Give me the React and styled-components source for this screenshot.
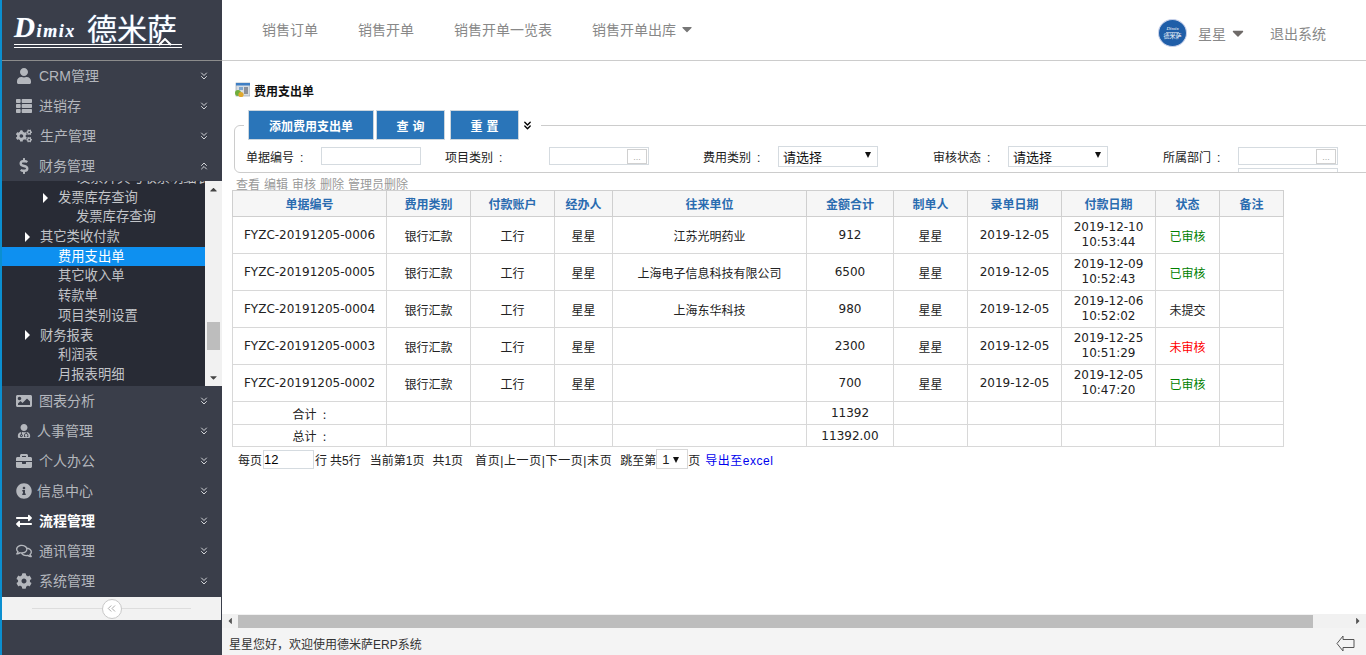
import styled, { createGlobalStyle } from "styled-components";
import {
  FaUser,
  FaThList,
  FaCogs,
  FaDollarSign,
  FaImage,
  FaUserMd,
  FaBriefcase,
  FaInfoCircle,
  FaExchangeAlt,
  FaRegComments,
  FaCog,
  FaCaretDown,
  FaCaretLeft,
  FaCaretRight,
  FaCaretUp,
} from "react-icons/fa";
import { ChevronsDown, ChevronsUp, ChevronsLeft } from "lucide-react";

const FONT = `"Liberation Sans", "Noto Sans CJK SC", sans-serif`;
const TABLE_FONT = `"DejaVu Sans", "Noto Sans CJK SC", sans-serif`;

const GlobalStyle = createGlobalStyle`
  html, body {
    margin: 0;
    padding: 0;
    height: 100%;
    overflow: hidden;
    background: #ffffff;
    font-family: ${FONT};
  }
  * {
    box-sizing: border-box;
  }
`;

const Page = styled.div`
  display: flex;
  width: 1366px;
  height: 655px;
  overflow: hidden;
`;

/* ---------- sidebar ---------- */

const Sidebar = styled.aside`
  flex: 0 0 222px;
  width: 222px;
  min-width: 0;
  display: flex;
  flex-direction: column;
  height: 100%;
  background: #3a3e4a;
  border-left: 2px solid #0b8fd0;
`;

const LogoArea = styled.div`
  height: 61px;
  flex: none;
  border-bottom: 1px solid #8c8c8c;
  padding: 10px 0 0 12px;
`;

const LogoWrap = styled.div`
  width: 168px;
  height: 38px;
  display: flex;
  align-items: flex-end;
  color: #ffffff;
  border-bottom: 4px double #ffffff;
  position: relative;
  text-shadow: 0 0 1px #6ea8e0;
`;

const LogoLatin = styled.span`
  flex: 0 0 73px;
  font-family: "Liberation Serif", serif;
  font-style: italic;
  font-weight: 700;
  font-size: 18px;
  line-height: 20px;
  letter-spacing: 1.6px;
  margin-bottom: 3px;
  white-space: nowrap;
`;

const LogoInitial = styled.span`
  font-size: 29px;
`;

const LogoCjk = styled.span`
  font-family: "Noto Sans CJK SC", sans-serif;
  font-size: 30px;
  line-height: 34px;
  white-space: nowrap;
`;

const LogoPeak = styled.svg`
  position: absolute;
  left: 144px;
  bottom: -2px;
`;

const MenuRow = styled.div`
  height: 30px;
  flex: none;
  display: flex;
  align-items: center;
  padding-left: 11px;
  color: ${(p) => (p.$active ? "#ffffff" : "#b4b7bd")};
  font-size: 14px;
  font-weight: ${(p) => (p.$active ? 700 : 400)};
`;

const MenuIcon = styled.span`
  width: 22px;
  display: flex;
  justify-content: center;
  font-size: ${(p) => p.$size || 16}px;
  color: ${(p) => (p.$active ? "#ffffff" : "#b4b7bd")};
  margin-right: ${(p) => p.$gap ?? 0}px;
`;

const MenuLabel = styled.span`
  flex: 1;
  padding-bottom: 2px;
  padding-left: 2px;
`;

const MenuChevron = styled.span`
  width: 15px;
  display: flex;
  color: #d2d4d8;
  margin-right: 9px;
`;

const SubPanel = styled.div`
  height: 205px;
  flex: none;
  display: flex;
  background: #282b35;
`;

const SubList = styled.div`
  flex: 1;
  min-width: 0;
  overflow: hidden;
  color: #c2c4c8;
  font-size: 13.3px;
`;

const SubRow = styled.div`
  height: 19.7px;
  line-height: 19.7px;
  display: flex;
  align-items: center;
  white-space: nowrap;
  padding-left: ${(p) => p.$indent}px;
  background: ${(p) => (p.$selected ? "#0e90f0" : "transparent")};
  color: ${(p) => (p.$selected ? "#ffffff" : "inherit")};
  margin-top: ${(p) => p.$offset || 0}px;
`;

const Arrow = styled.span`
  width: 0;
  height: 0;
  border-left: 5px solid #ffffff;
  border-top: 5px solid transparent;
  border-bottom: 5px solid transparent;
  margin-right: 10px;
`;

const VScroll = styled.div`
  flex: 0 0 17px;
  background: #f1f1f1;
  display: flex;
  flex-direction: column;
  align-items: center;
  justify-content: space-between;
  color: #444;
  font-size: 11px;
  padding: 3px 0;
  position: relative;
`;

const VThumb = styled.div`
  position: absolute;
  top: 141px;
  left: 2px;
  width: 13px;
  height: 28px;
  background: #bdbdbd;
`;

const CollapseStrip = styled.div`
  height: 23px;
  margin-top: 1px;
  flex: none;
  width: 219px;
  background: #f2f2f2;
  display: flex;
  align-items: center;
  justify-content: center;
  position: relative;
  &::before {
    content: "";
    position: absolute;
    left: 30px;
    right: 30px;
    top: 11px;
    height: 1px;
    background: #dddddd;
  }
`;

const CollapseKnob = styled.div`
  width: 20px;
  height: 20px;
  border-radius: 50%;
  background: #ffffff;
  border: 1px solid #c8c8c8;
  z-index: 1;
  display: flex;
  align-items: center;
  justify-content: center;
  color: #999999;
`;

/* ---------- main column ---------- */

const Main = styled.main`
  flex: 1;
  min-width: 0;
  display: flex;
  flex-direction: column;
`;

const TopBar = styled.header`
  height: 61px;
  flex: none;
  display: flex;
  align-items: center;
  border-bottom: 1px solid #cccccc;
  padding: 0 40px;
  font-size: 14px;
  color: #888888;
`;

const TopNav = styled.nav`
  flex: 1;
  display: flex;
  gap: 40px;
  margin-bottom: 3px;
`;

const TopLink = styled.span`
  display: flex;
  align-items: center;
  gap: 3px;
  svg {
    font-size: 16px;
    color: #777777;
  }
`;

const UserBox = styled.div`
  display: flex;
  align-items: center;
  margin-top: 5px;
  svg {
    color: #6e6a68;
  }
`;

const Avatar = styled.div`
  width: 29px;
  height: 28px;
  border-radius: 50%;
  background: #1f5ea8;
  border: 1px solid #c9d2ea;
  color: #ffffff;
  display: flex;
  flex-direction: column;
  align-items: center;
  justify-content: center;
  font-size: 6px;
  line-height: 7px;
  margin-right: 11px;
`;

const AvatarLatin = styled.span`
  font-family: "Liberation Serif", serif;
  font-style: italic;
  border-bottom: 1px solid #9fb8d8;
  font-size: 5px;
`;

const UserName = styled.span`
  margin-right: 3px;
`;

const Logout = styled.span`
  margin-left: 23px;
`;

const Content = styled.section`
  flex: 1;
  min-height: 0;
  overflow: hidden;
  padding: 21px 0 0 10px;
`;

const TitleRow = styled.div`
  height: 16px;
  display: flex;
  align-items: center;
  gap: 4px;
  margin-left: 2px;
  font-size: 12px;
  font-weight: 700;
  color: #111111;
`;

const FilterSet = styled.fieldset`
  width: 1200px;
  height: 63px;
  margin: 12px 0 0 2px;
  padding: 0 0 0 9px;
  border: 1px solid #cccccc;
  border-radius: 6px;
  overflow: hidden;
`;

const FilterLegend = styled.legend`
  display: flex;
  align-items: center;
  height: 30px;
  padding: 0 7px 0 4px;
`;

const ActionButton = styled.button`
  height: 30px;
  width: ${(p) => p.$w}px;
  margin-right: ${(p) => p.$mr || 0}px;
  border: 1px solid #ccd6de;
  background: #2a75b9;
  color: #ffffff;
  font-family: ${FONT};
  font-size: 12px;
  font-weight: 700;
  letter-spacing: ${(p) => p.$ls || 0}px;
  padding: 0 0 0 ${(p) => p.$ls || 0}px;
`;

const ExpandIcon = styled.span`
  display: flex;
  margin-left: 2px;
  color: #000000;
`;

const FilterRow = styled.div`
  display: flex;
  align-items: center;
  height: 22px;
  margin: 5px 0 0 2px;
  font-size: 12px;
  color: #222222;
`;

const FieldLabel = styled.label`
  width: ${(p) => p.$w}px;
  margin-left: ${(p) => p.$ml || 0}px;
  white-space: pre;
`;

const TextBox = styled.input`
  width: 100px;
  height: 18px;
  border: 1px solid #d5dbe0;
  padding: 0 2px;
  font-family: ${FONT};
  font-size: 12px;
  outline: none;
`;

const PickerBox = styled.div`
  width: 100px;
  height: 18px;
  flex: none;
  border: 1px solid #d5dbe0;
  display: flex;
  justify-content: flex-end;
  align-items: center;
  padding-right: 1px;
  margin-left: ${(p) => p.$ml || 0}px;
  margin-top: ${(p) => p.$mt || 0}px;
`;

const PickerButton = styled.span`
  width: 20px;
  height: 15px;
  border: 1px solid #d0d0d0;
  font-size: 9px;
  line-height: 15px;
  text-align: center;
  color: #aaaaaa;
`;

const SelectBox = styled.div`
  width: 100px;
  height: 21px;
  flex: none;
  border: 1px solid #d5dbe0;
  display: flex;
  align-items: center;
  justify-content: space-between;
  padding: 0 6px 0 4px;
  font-size: 13px;
  color: #111111;
`;

const Triangle = styled.span`
  border-left: 3px solid transparent;
  border-right: 3px solid transparent;
  border-top: 6px solid #111111;
  margin-bottom: ${(p) => p.$mb ?? 2}px;
`;

const OpsRow = styled.div`
  height: 17px;
  line-height: 24px;
  margin-left: 4px;
  display: flex;
  gap: 4px;
  font-size: 12px;
  color: #999999;
`;

const Grid = styled.table`
  width: 1051px;
  border-collapse: collapse;
  table-layout: fixed;
  font-family: ${TABLE_FONT};
  font-size: 12px;
  color: #222222;
  th, td {
    border: 1px solid #d8d8d8;
    text-align: center;
    padding: 0;
    font-weight: 400;
  }
`;

const HeadRow = styled.tr`
  height: 26px;
  background: #f6f6f6;
  th {
    color: #2a6cb0;
    font-weight: 700;
    border-color: #cfcfcf;
  }
`;

const BodyRow = styled.tr`
  height: ${(p) => p.$h || 37}px;
`;

const DateText = styled.div`
  line-height: 15px;
`;

const Status = styled.td`
  && {
    color: ${(p) => p.$color};
  }
`;

const Pager = styled.div`
  display: flex;
  align-items: center;
  height: 20px;
  margin: 2px 0 0 6px;
  font-size: 12px;
  color: #222222;
  white-space: pre;
`;

const PagerPart = styled.span`
  margin-left: ${(p) => p.$ml || 0}px;
  letter-spacing: ${(p) => p.$ls || 0}px;
`;

const PagerInput = styled.input`
  width: 51px;
  height: 19px;
  margin-left: 1px;
  border: 1px solid #d5dbe0;
  padding: 0;
  font-family: ${FONT};
  font-size: 13px;
  outline: none;
`;

const PagerSelect = styled.div`
  width: 32px;
  height: 20px;
  border: 1px solid #d8d8d8;
  display: flex;
  align-items: center;
  justify-content: space-between;
  padding: 0 8px 0 5px;
  font-size: 13px;
`;

const ExportLink = styled.a`
  color: #0000ee;
  margin-left: 5px;
  letter-spacing: 0.5px;
`;

const HScroll = styled.div`
  height: 14px;
  flex: none;
  display: flex;
  align-items: center;
  background: #f1f1f1;
  color: #555555;
  font-size: 10px;
`;

const HArrow = styled.span`
  flex: 0 0 ${(p) => p.$w}px;
  display: flex;
  justify-content: center;
`;

const HThumb = styled.div`
  height: 13px;
  margin-top: 1px;
  flex: 0 0 1075px;
  background: #bdbdbd;
`;

const HTrack = styled.div`
  flex: 1;
`;

const StatusBar = styled.footer`
  height: 27px;
  flex: none;
  background: #f4f4f4;
  display: flex;
  align-items: center;
  justify-content: space-between;
  padding: 4px 11px 0 7px;
  font-size: 12px;
  color: #333333;
`;

const menuTop = [
  { label: "CRM管理", icon: <FaUser />, gap: 2 },
  { label: "进销存", icon: <FaThList />, gap: 2 },
  { label: "生产管理", icon: <FaCogs />, gap: 3 },
  { label: "财务管理", icon: <FaDollarSign />, gap: 2, open: true },
];

const menuBottom = [
  { label: "图表分析", icon: <FaImage />, gap: 2 },
  { label: "人事管理", icon: <FaUserMd />, gap: 0, size: 14 },
  { label: "个人办公", icon: <FaBriefcase />, gap: 2 },
  { label: "信息中心", icon: <FaInfoCircle />, gap: 0 },
  { label: "流程管理", icon: <FaExchangeAlt />, gap: 2, active: true },
  { label: "通讯管理", icon: <FaRegComments />, gap: 2 },
  { label: "系统管理", icon: <FaCog />, gap: 2 },
];

const subItems = [
  { label: "发票开具与收票明细表", indent: 75 },
  { label: "发票库存查询", indent: 41, arrow: true },
  { label: "发票库存查询", indent: 74 },
  { label: "其它类收付款", indent: 23, arrow: true },
  { label: "费用支出单", indent: 56, selected: true },
  { label: "其它收入单", indent: 56 },
  { label: "转款单", indent: 56 },
  { label: "项目类别设置", indent: 56 },
  { label: "财务报表", indent: 23, arrow: true },
  { label: "利润表", indent: 56 },
  { label: "月报表明细", indent: 56 },
];

const columns = [154, 84, 84, 58, 194, 87, 74, 94, 94, 64, 64];
const headers = ["单据编号", "费用类别", "付款账户", "经办人", "往来单位", "金额合计", "制单人", "录单日期", "付款日期", "状态", "备注"];

const rows = [
  { code: "FYZC-20191205-0006", partner: "江苏光明药业", total: "912", pay: ["2019-12-10", "10:53:44"], status: "已审核", color: "#008000" },
  { code: "FYZC-20191205-0005", partner: "上海电子信息科技有限公司", total: "6500", pay: ["2019-12-09", "10:52:43"], status: "已审核", color: "#008000" },
  { code: "FYZC-20191205-0004", partner: "上海东华科技", total: "980", pay: ["2019-12-06", "10:52:02"], status: "未提交", color: "#222222" },
  { code: "FYZC-20191205-0003", partner: "", total: "2300", pay: ["2019-12-25", "10:51:29"], status: "未审核", color: "#ff0000" },
  { code: "FYZC-20191205-0002", partner: "", total: "700", pay: ["2019-12-05", "10:47:20"], status: "已审核", color: "#008000" },
];

const PageIcon = () => (
  <svg width="16" height="16" viewBox="0 0 16 16">
    <rect x="2" y="1" width="14" height="13" fill="#d8dde2" stroke="#8a97a5" strokeWidth="0.6" />
    <rect x="2" y="1" width="14" height="2.5" fill="#3f7fc4" />
    <rect x="5" y="5" width="4" height="3" fill="#7ea6cf" />
    <rect x="10" y="5" width="4" height="7" fill="#8b9099" />
    <circle cx="4" cy="11" r="3" fill="#6fae3c" />
    <circle cx="7" cy="12.5" r="2.6" fill="#e0a82e" />
  </svg>
);

const BackArrow = () => (
  <svg width="19" height="19" viewBox="0 0 19 19" fill="none" stroke="#555555" strokeWidth="1">
    <path d="M7 2 L1 9.5 L7 17 V13.5 H18 V5.5 H7 Z" />
  </svg>
);

const MenuItem = ({ item }) => (
  <MenuRow $active={item.active}>
    <MenuIcon $active={item.active} $size={item.size} $gap={item.gap}>
      {item.icon}
    </MenuIcon>
    <MenuLabel>{item.label}</MenuLabel>
    <MenuChevron>
      {item.open ? <ChevronsUp size={12} strokeWidth={2} /> : <ChevronsDown size={12} strokeWidth={2} />}
    </MenuChevron>
  </MenuRow>
);

const EmptyCells = ({ count }) => Array.from({ length: count }, (_, i) => <td key={i} />);

const App = () => {
  return (
    <Page>
      <GlobalStyle />
      <Sidebar>
        <LogoArea>
          <LogoWrap>
            <LogoLatin>
              <LogoInitial>D</LogoInitial>imix
            </LogoLatin>
            <LogoCjk>德米萨</LogoCjk>
            <LogoPeak width="14" height="8" viewBox="0 0 14 8" fill="none" stroke="#ffffff" strokeWidth="2">
              <path d="M1 7 L7 1 L13 7" />
            </LogoPeak>
          </LogoWrap>
        </LogoArea>
        {menuTop.map((item) => (
          <MenuItem key={item.label} item={item} />
        ))}
        <SubPanel>
          <SubList>
            {subItems.map((s, i) => (
              <SubRow key={i} $indent={s.indent} $selected={s.selected} $offset={i === 0 ? -13 : 0}>
                {s.arrow && <Arrow />}
                {s.label}
              </SubRow>
            ))}
          </SubList>
          <VScroll>
            <FaCaretUp />
            <VThumb />
            <FaCaretDown />
          </VScroll>
        </SubPanel>
        {menuBottom.map((item) => (
          <MenuItem key={item.label} item={item} />
        ))}
        <CollapseStrip>
          <CollapseKnob>
            <ChevronsLeft size={13} strokeWidth={1.5} />
          </CollapseKnob>
        </CollapseStrip>
      </Sidebar>

      <Main>
        <TopBar>
          <TopNav>
            <TopLink>销售订单</TopLink>
            <TopLink>销售开单</TopLink>
            <TopLink>销售开单一览表</TopLink>
            <TopLink>
              销售开单出库 <FaCaretDown />
            </TopLink>
          </TopNav>
          <UserBox>
            <Avatar>
              <AvatarLatin>Dimix</AvatarLatin>
              <span>德米萨</span>
            </Avatar>
            <UserName>星星</UserName>
            <FaCaretDown size={18} />
            <Logout>退出系统</Logout>
          </UserBox>
        </TopBar>

        <Content>
          <TitleRow>
            <PageIcon />
            费用支出单
          </TitleRow>
          <FilterSet>
            <FilterLegend>
              <ActionButton $w={126} $mr={2}>添加费用支出单</ActionButton>
              <ActionButton $w={69} $mr={5} $ls={4}>查询</ActionButton>
              <ActionButton $w={69} $ls={4}>重置</ActionButton>
              <ExpandIcon>
                <ChevronsDown size={13} strokeWidth={2.5} />
              </ExpandIcon>
            </FilterLegend>
            <FilterRow>
              <FieldLabel $w={75}>{"单据编号\u2002:"}</FieldLabel>
              <TextBox />
              <FieldLabel $w={104} $ml={24}>{"项目类别\u2002:"}</FieldLabel>
              <PickerBox>
                <PickerButton>...</PickerButton>
              </PickerBox>
              <FieldLabel $w={75} $ml={54}>{"费用类别\u2002:"}</FieldLabel>
              <SelectBox>
                请选择 <Triangle />
              </SelectBox>
              <FieldLabel $w={75} $ml={55}>{"审核状态\u2002:"}</FieldLabel>
              <SelectBox>
                请选择 <Triangle />
              </SelectBox>
              <FieldLabel $w={75} $ml={55}>{"所属部门\u2002:"}</FieldLabel>
              <PickerBox>
                <PickerButton>...</PickerButton>
              </PickerBox>
            </FilterRow>
            <PickerBox $ml={994} $mt={1} />
          </FilterSet>
          <OpsRow>
            <span>查看</span>
            <span>编辑</span>
            <span>审核</span>
            <span>删除</span>
            <span>管理员删除</span>
          </OpsRow>
          <Grid>
            <colgroup>
              {columns.map((w, i) => (
                <col key={i} style={{ width: w }} />
              ))}
            </colgroup>
            <thead>
              <HeadRow>
                {headers.map((h) => (
                  <th key={h}>{h}</th>
                ))}
              </HeadRow>
            </thead>
            <tbody>
              {rows.map((r) => (
                <BodyRow key={r.code}>
                  <td>{r.code}</td>
                  <td>银行汇款</td>
                  <td>工行</td>
                  <td>星星</td>
                  <td>{r.partner}</td>
                  <td>{r.total}</td>
                  <td>星星</td>
                  <td>
                    <DateText>2019-12-05</DateText>
                  </td>
                  <td>
                    <DateText>{r.pay[0]}</DateText>
                    <DateText>{r.pay[1]}</DateText>
                  </td>
                  <Status $color={r.color}>{r.status}</Status>
                  <td />
                </BodyRow>
              ))}
              <BodyRow $h={23}>
                <td>{"合计\u2002:"}</td>
                <EmptyCells count={4} />
                <td>11392</td>
                <EmptyCells count={5} />
              </BodyRow>
              <BodyRow $h={22}>
                <td>{"总计\u2002:"}</td>
                <EmptyCells count={4} />
                <td>11392.00</td>
                <EmptyCells count={5} />
              </BodyRow>
            </tbody>
          </Grid>
          <Pager>
            每页
            <PagerInput defaultValue="12" />
            <PagerPart $ml={1}>行</PagerPart>
            <PagerPart $ml={3}>共5行</PagerPart>
            <PagerPart $ml={9}>当前第1页</PagerPart>
            <PagerPart $ml={8}>共1页</PagerPart>
            <PagerPart $ml={12} $ls={0.6}>首页|上一页|下一页|末页</PagerPart>
            <PagerPart $ml={8}>跳至第</PagerPart>
            <PagerSelect>
              1 <Triangle $mb={-2} />
            </PagerSelect>
            <PagerPart>页</PagerPart>
            <ExportLink>导出至excel</ExportLink>
          </Pager>
        </Content>

        <HScroll>
          <HArrow $w={16}>
            <FaCaretLeft />
          </HArrow>
          <HThumb />
          <HTrack />
          <HArrow $w={17}>
            <FaCaretRight />
          </HArrow>
        </HScroll>
        <StatusBar>
          星星您好，欢迎使用德米萨ERP系统
          <BackArrow />
        </StatusBar>
      </Main>
    </Page>
  );
};

export default App;
